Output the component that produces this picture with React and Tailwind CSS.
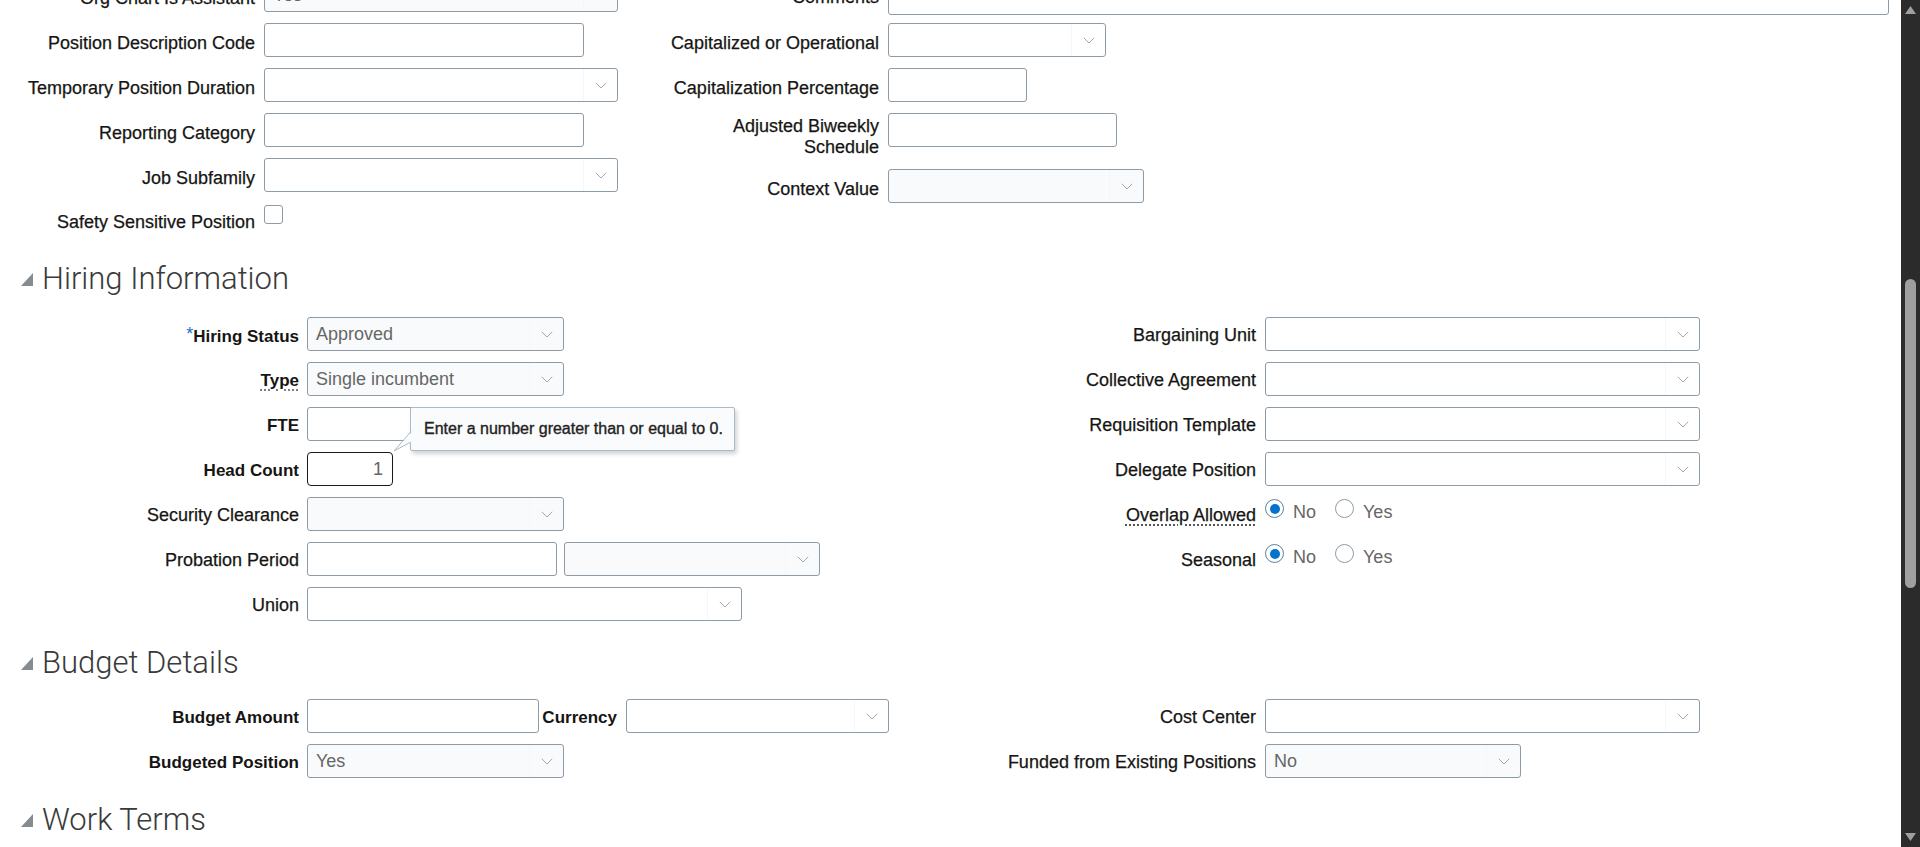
import React from "react";

// Select chevron
const Chevron = () => (
    <svg width="12" height="7" viewBox="0 0 12 7" fill="none">
        <polyline points="0.8,0.8 6,6 11.2,0.8" stroke="#9fa9b2" strokeWidth="1" />
    </svg>
);

// Label text
const L = ({ children, b = false, dotted = false }) => (
    <span
        className={`${b ? "text-[17px] font-bold" : "text-[18px] [-webkit-text-stroke:0.25px_#161513]"} leading-[22px] text-[#161513] whitespace-nowrap ${dotted ? "underline decoration-dotted underline-offset-[4px] decoration-[#555]" : ""}`}
    >
        {children}
    </span>
);

const TextInput = ({ w }) => (
    <div className={`${w} h-[34px] shrink-0 rounded-[3px] border border-[#8d9ba6] bg-white`} />
);

const Select = ({ w, value = "", tinted = false }) => (
    <div
        className={`${w} h-[34px] shrink-0 flex items-center rounded-[3px] border border-[#8d9ba6] ${tinted ? "bg-[#f8fafc]" : "bg-white"}`}
    >
        <span className="flex-1 pl-[8px] text-[18px] leading-[22px] text-[#666] whitespace-nowrap overflow-hidden">{value}</span>
        <span className="w-[34px] h-full flex items-center justify-center border-l border-[#f5f6f7]">
            <Chevron />
        </span>
    </div>
);

const Radio = ({ checked, label, className = "" }) => (
    <div className={`flex items-start ${className}`}>
        <span
            className={`mt-[2px] w-[19px] h-[19px] rounded-full border bg-white flex items-center justify-center ${checked ? "border-[#5d7f9f]" : "border-[#8d9ba6]"}`}
        >
            {checked && <span className="w-[10px] h-[10px] rounded-full bg-[#0572ce]" />}
        </span>
        <span className="ml-[9px] pt-[4px] text-[18px] leading-[22px] text-[#666]">{label}</span>
    </div>
);

// Form row: right aligned label + field(s)
const Row = ({ lw, gap = "gap-[9px]", label, children, top = false, lc = "pt-[4px]", className = "" }) => (
    <div className={`flex min-h-[34px] ${gap} ${top ? "items-start" : "items-center"} ${className}`}>
        <div className={`${lw} shrink-0 text-right ${lc}`}>{label}</div>
        <div className="flex items-start">{children}</div>
    </div>
);

const SectionHeading = ({ title, className = "" }) => (
    <div className={`flex items-center h-[40px] ${className}`}>
        <svg width="12" height="13" viewBox="0 0 12 13" className="ml-[21px] mr-[9px]">
            <polygon points="12,0 12,13 0,13" fill="#868b90" />
        </svg>
        <span className="font-['Roboto',sans-serif] font-light text-[31px] leading-[40px] text-[#3a3a3a]">{title}</span>
    </div>
);

const Tooltip = () => (
    <div className="absolute left-[103px] top-0 z-10 w-[325px] h-[44px] flex items-center pl-[13px] rounded-[2px] border border-[#a9bac8] bg-[#fafbfc] shadow-[2px_3px_4px_rgba(0,0,0,0.18)]">
        <svg width="20" height="46" viewBox="0 0 20 46" className="absolute left-[-18px] top-[-1px]">
            <polygon points="19.5,24.5 1,44 19.5,35" fill="#fafbfc" />
            <polyline points="18,24.5 1,44 18,35" fill="none" stroke="#a9bac8" strokeWidth="1" />
        </svg>
        <span className="font-['Liberation_Sans',Arial,sans-serif] text-[16px] leading-[20px] text-[#222] [-webkit-text-stroke:0.35px_#222]">
            Enter a number greater than or equal to 0.
        </span>
    </div>
);

const Scrollbar = () => (
    <div className="w-[19px] shrink-0 h-[847px] bg-[#2b2b2b] flex flex-col items-center">
        <svg width="11" height="8" viewBox="0 0 11 8" className="mt-[6px]">
            <polygon points="5.5,0 11,8 0,8" fill="#9f9f9f" />
        </svg>
        <div className="mt-[265px] w-[11px] h-[309px] rounded-full bg-[#9f9f9f]" />
        <div className="flex-1" />
        <svg width="11" height="8" viewBox="0 0 11 8" className="mb-[6px]">
            <polygon points="0,0 11,0 5.5,8" fill="#9f9f9f" />
        </svg>
    </div>
);

export default function App() {
    const topL = "w-[255px]";
    const topR = "w-[239px]";
    const hL = "w-[299px]";
    const hR = "w-[296px]";
    const tl = "pt-[7px]";

    return (
        <div className="h-[847px] w-full overflow-hidden flex bg-white font-['Liberation_Sans',Arial,sans-serif]">
            <div className="flex-1 overflow-hidden">
                {/* Top (partially scrolled) section */}
                <div className="flex items-start">
                    <div className="w-[640px] shrink-0 -mt-[22px] flex flex-col gap-[11px]">
                        <Row lw={topL} lc={tl} label={<L>Org Chart Is Assistant</L>}>
                            <Select w="w-[354px]" value="Yes" tinted />
                        </Row>
                        <Row lw={topL} lc={tl} label={<L>Position Description Code</L>}>
                            <TextInput w="w-[320px]" />
                        </Row>
                        <Row lw={topL} lc={tl} label={<L>Temporary Position Duration</L>}>
                            <Select w="w-[354px]" />
                        </Row>
                        <Row lw={topL} lc={tl} label={<L>Reporting Category</L>}>
                            <TextInput w="w-[320px]" />
                        </Row>
                        <Row lw={topL} lc={tl} label={<L>Job Subfamily</L>}>
                            <Select w="w-[354px]" />
                        </Row>
                        <Row lw={topL} top lc="pt-[8px]" label={<L>Safety Sensitive Position</L>}>
                            <div className="mt-[2px] w-[19px] h-[19px] rounded-[3px] border border-[#8d9ba6] bg-white" />
                        </Row>
                    </div>

                    <div className="flex-1 -mt-[27px] pr-[12px] flex flex-col gap-[11px]">
                        <div className="flex items-center gap-[9px] -mb-[3px]">
                            <div className={`${topR} shrink-0 text-right ${tl}`}>
                                <L>Comments</L>
                            </div>
                            <div className="flex-1 h-[42px] rounded-[3px] border border-[#8d9ba6] bg-white" />
                        </div>
                        <Row lw={topR} lc={tl} label={<L>Capitalized or Operational</L>}>
                            <Select w="w-[218px]" />
                        </Row>
                        <Row lw={topR} lc={tl} label={<L>Capitalization Percentage</L>}>
                            <TextInput w="w-[139px]" />
                        </Row>
                        <Row
                            lw={topR}
                            top
                            lc="pt-[3px] leading-[21px]"
                            label={
                                <span className="text-[18px] leading-[21px] text-[#161513] [-webkit-text-stroke:0.25px_#161513]">
                                    Adjusted Biweekly
                                    <br />
                                    Schedule
                                </span>
                            }
                        >
                            <TextInput w="w-[229px]" />
                        </Row>
                        <Row lw={topR} lc={tl} label={<L>Context Value</L>}>
                            <Select w="w-[256px]" tinted />
                        </Row>
                    </div>
                </div>

                {/* Hiring Information */}
                <SectionHeading title="Hiring Information" className="mt-[22px]" />
                <div className="mt-[18px] flex items-start">
                    <div className="w-[960px] shrink-0 flex flex-col gap-[11px]">
                        <Row
                            lw={hL}
                            gap="gap-[8px]"
                            label={
                                <span className="whitespace-nowrap">
                                    <span className="relative -top-[2px] text-[18px] text-[#1f6fc5]">*</span>
                                    <L b>Hiring Status</L>
                                </span>
                            }
                        >
                            <Select w="w-[257px]" value="Approved" tinted />
                        </Row>
                        <Row lw={hL} gap="gap-[8px]" label={<L b dotted>Type</L>}>
                            <Select w="w-[257px]" value="Single incumbent" tinted />
                        </Row>
                        <Row lw={hL} gap="gap-[8px]" label={<L b>FTE</L>}>
                            <div className="relative">
                                <TextInput w="w-[320px]" />
                                <Tooltip />
                            </div>
                        </Row>
                        <Row lw={hL} gap="gap-[8px]" label={<L b>Head Count</L>}>
                            <div className="w-[86px] h-[34px] flex items-center justify-end pr-[9px] rounded-[4px] border-[1.5px] border-[#1a1a1a] bg-white text-[18px] text-[#666]">
                                1
                            </div>
                        </Row>
                        <Row lw={hL} gap="gap-[8px]" label={<L>Security Clearance</L>}>
                            <Select w="w-[257px]" tinted />
                        </Row>
                        <Row lw={hL} gap="gap-[8px]" label={<L>Probation Period</L>}>
                            <div className="flex gap-[7px]">
                                <TextInput w="w-[250px]" />
                                <Select w="w-[256px]" tinted />
                            </div>
                        </Row>
                        <Row lw={hL} gap="gap-[8px]" label={<L>Union</L>}>
                            <Select w="w-[435px]" />
                        </Row>
                    </div>

                    <div className="flex flex-col gap-[11px]">
                        <Row lw={hR} label={<L>Bargaining Unit</L>}>
                            <Select w="w-[435px]" />
                        </Row>
                        <Row lw={hR} label={<L>Collective Agreement</L>}>
                            <Select w="w-[435px]" />
                        </Row>
                        <Row lw={hR} label={<L>Requisition Template</L>}>
                            <Select w="w-[435px]" />
                        </Row>
                        <Row lw={hR} label={<L>Delegate Position</L>}>
                            <Select w="w-[435px]" />
                        </Row>
                        <Row lw={hR} top lc="pt-[7px]" label={<L dotted>Overlap Allowed</L>}>
                            <Radio checked label="No" />
                            <Radio checked={false} label="Yes" className="ml-[19px]" />
                        </Row>
                        <Row lw={hR} top lc="pt-[7px]" label={<L>Seasonal</L>}>
                            <Radio checked label="No" />
                            <Radio checked={false} label="Yes" className="ml-[19px]" />
                        </Row>
                    </div>
                </div>

                {/* Budget Details */}
                <SectionHeading title="Budget Details" className="mt-[22px]" />
                <div className="mt-[16px] flex items-start">
                    <div className="w-[960px] shrink-0 flex flex-col gap-[11px]">
                        <Row lw={hL} gap="gap-[8px]" label={<L b>Budget Amount</L>}>
                            <div className="flex items-center">
                                <TextInput w="w-[232px]" />
                                <div className="w-[78px] text-right pt-[4px]">
                                    <L b>Currency</L>
                                </div>
                                <div className="ml-[9px]">
                                    <Select w="w-[263px]" />
                                </div>
                            </div>
                        </Row>
                        <Row lw={hL} gap="gap-[8px]" label={<L b>Budgeted Position</L>}>
                            <Select w="w-[257px]" value="Yes" tinted />
                        </Row>
                    </div>
                    <div className="flex flex-col gap-[11px]">
                        <Row lw={hR} label={<L>Cost Center</L>}>
                            <Select w="w-[435px]" />
                        </Row>
                        <Row lw={hR} label={<L>Funded from Existing Positions</L>}>
                            <Select w="w-[256px]" value="No" tinted />
                        </Row>
                    </div>
                </div>

                {/* Work Terms */}
                <SectionHeading title="Work Terms" className="mt-[22px]" />
            </div>
            <Scrollbar />
        </div>
    );
}
